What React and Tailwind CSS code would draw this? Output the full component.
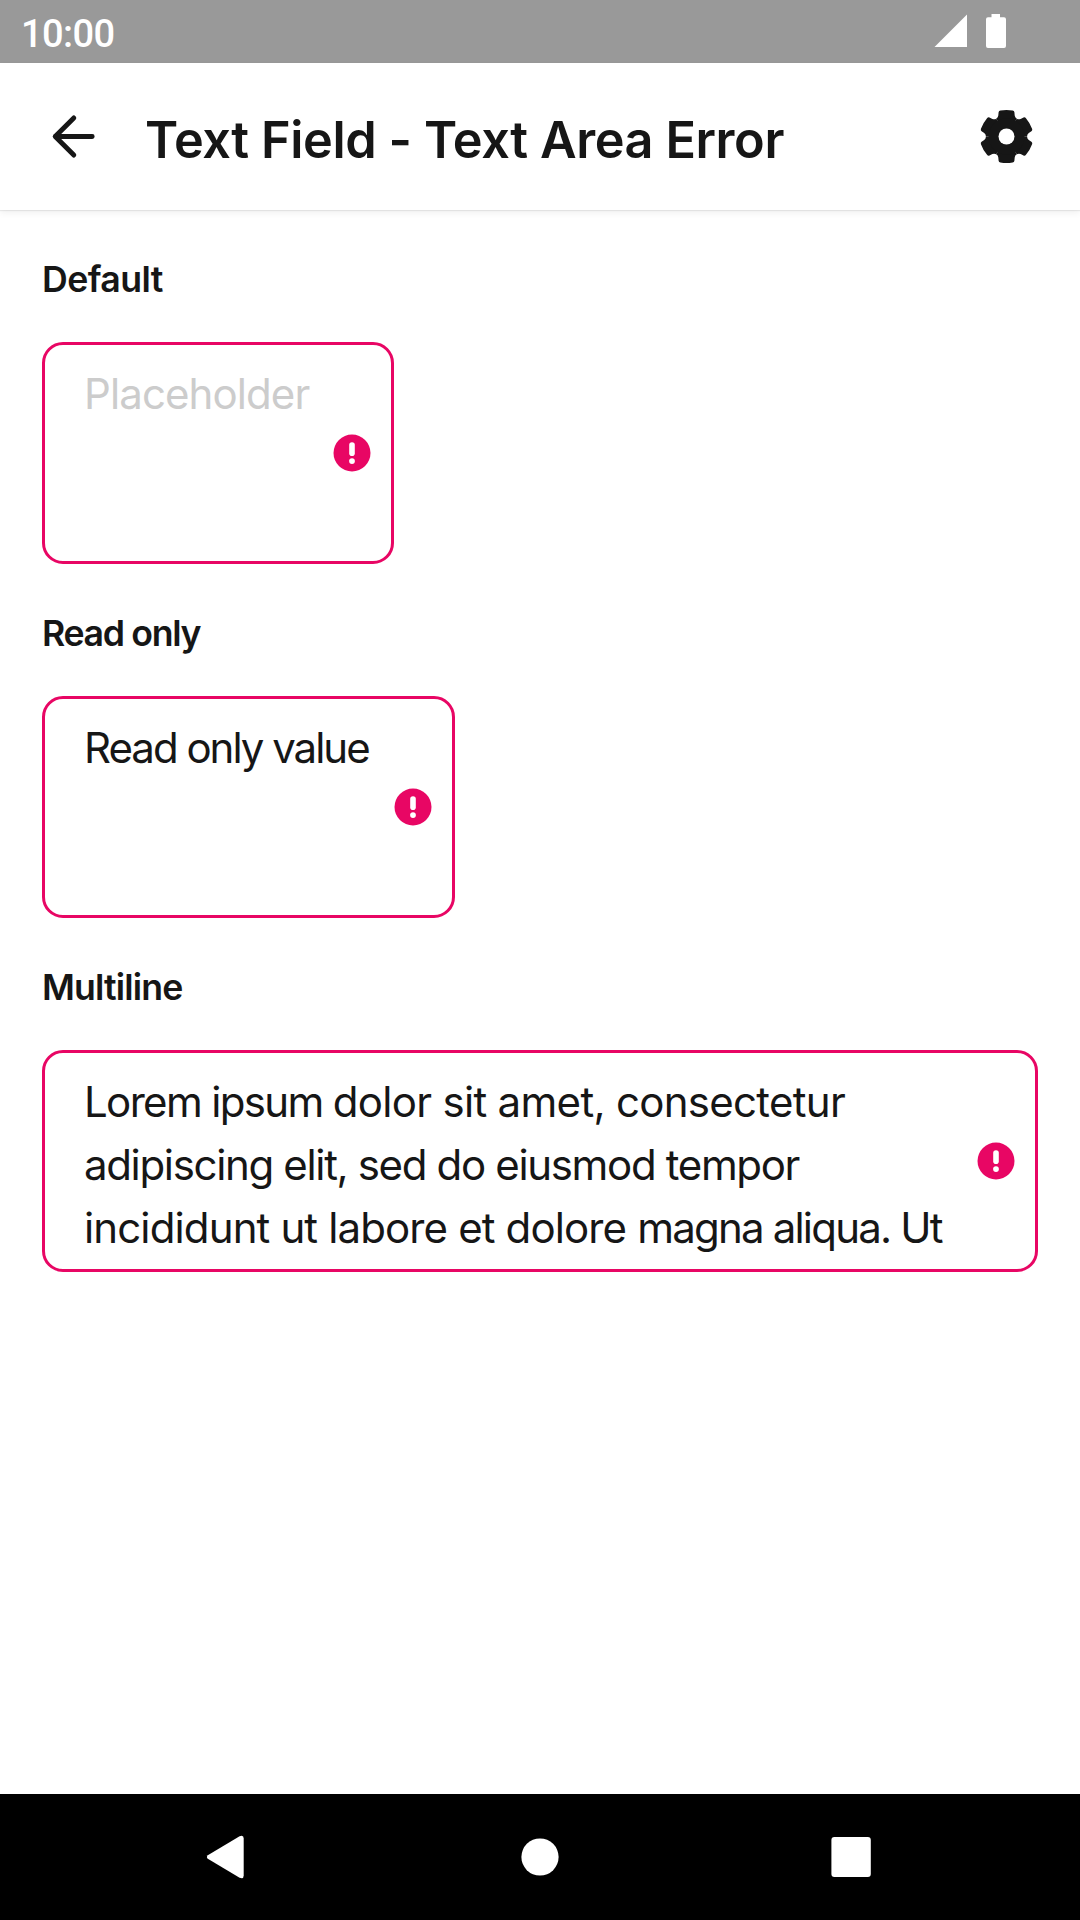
const ACCENT = "#E80664";

function SignalIcon() {
  return (
    <svg width="34" height="34" viewBox="0 0 34 34" fill="#fff">
      <path d="M0.5 33 L33 0.5 V33 Z" />
    </svg>
  );
}

function BatteryIcon() {
  return (
    <svg width="20" height="34" viewBox="0 0 20 34" fill="#fff">
      <path d="M5.5 0H14V3.3H18A2 2 0 0 1 20 5.3V32A2 2 0 0 1 18 34H2A2 2 0 0 1 0 32V5.3A2 2 0 0 1 2 3.3H5.5Z" />
    </svg>
  );
}

function BackIcon() {
  return (
    <svg width="63" height="63" viewBox="0 0 63 63" fill="none" stroke="#161616" strokeWidth="4.9" strokeLinecap="round" strokeLinejoin="round">
      <path d="M50.2 31.5H13.2M31.8 12.9L13.2 31.5L31.8 50.1" />
    </svg>
  );
}

const TEETH = [0, 60, 120, 180, 240, 300];

function GearIcon() {
  return (
    <svg width="63" height="63" viewBox="-31.5 -31.5 63 63" fill="#161616">
      {TEETH.map((angle) => (
        <path
          key={angle}
          transform={`rotate(${angle})`}
          d="M0 0L-10.3 -17.8Q-8.4 -18.9 -8.2 -21L-7.9 -24.2Q-7.7 -25.7 -6.1 -26Q0 -27.1 6.1 -26Q7.7 -25.7 7.9 -24.2L8.2 -21Q8.4 -18.9 10.3 -17.8Z"
        />
      ))}
      <circle r="18" />
      <circle r="8" fill="#fff" />
    </svg>
  );
}

function ErrorIcon() {
  return (
    <svg className="shrink-0" width="38" height="38" viewBox="-19 -19 38 38">
      <circle r="18.5" fill={ACCENT} />
      <rect x="-2.8" y="-10.7" width="5.6" height="13.8" rx="2.8" fill="#fff" />
      <circle cy="8.1" r="2.9" fill="#fff" />
    </svg>
  );
}

function Field({ label, labelClass, widthClass, children }) {
  return (
    <section className="mb-[42px]">
      <h2 className={`h-[54px] whitespace-nowrap text-[35.7px] leading-[55px] font-semibold ${labelClass}`}>{label}</h2>
      <div className={`mt-9 flex h-[222px] items-center justify-between overflow-hidden rounded-[21px] border-[3px] border-[#E80664] pr-5 pl-[39px] ${widthClass}`}>
        <div className="flex h-[199px] flex-col self-end text-[42px] leading-[63px] font-normal whitespace-nowrap">{children}</div>
        <ErrorIcon />
      </div>
    </section>
  );
}

export default function App() {
  return (
    <div className="flex h-[1920px] w-[1080px] flex-col overflow-hidden bg-white font-['Inter',sans-serif] text-[#161616]">
      <div className="flex h-[63px] shrink-0 items-center justify-between bg-[#999999] pr-[74px] pl-[21px]">
        <span className="mt-[4px] font-['Roboto',sans-serif] text-[38px] leading-none font-medium tracking-[-0.6px] text-white">10:00</span>
        <div className="mb-[1px] flex gap-[18px]">
          <SignalIcon />
          <BatteryIcon />
        </div>
      </div>

      <header className="flex h-[147px] shrink-0 items-center bg-white pr-[42px] pl-[42px] shadow-[0_1px_1px_rgba(0,0,0,0.07),0_3px_7px_rgba(0,0,0,0.06)]">
        <BackIcon />
        <h1 className="mt-[7px] ml-10 flex-1 text-[50.4px] leading-[60px] font-semibold tracking-[-0.4px] whitespace-nowrap">Text Field - Text Area Error</h1>
        <GearIcon />
      </header>

      <main className="flex-1 px-[42px] pt-[42px]">
        <Field label="Default" labelClass="tracking-[-0.6px]" widthClass="w-[352px]">
          <span className="tracking-[-0.9px] text-[#CCCCCC]">Placeholder</span>
        </Field>
        <Field label="Read only" labelClass="tracking-[-1.35px]" widthClass="w-[413px]">
          <span className="tracking-[-2px]">Read only value</span>
        </Field>
        <Field label="Multiline" labelClass="tracking-[-0.85px]" widthClass="w-[996px]">
          <p className="tracking-[-0.7px]">
            <span className="tracking-[-1.65px]">Lorem ipsum </span>dolor sit amet, consectetur
          </p>
          <p className="tracking-[-1.34px]">adipiscing elit, sed do eiusmod tempor</p>
          <p className="tracking-[-0.87px]">
            incididunt ut labore et dolore <span className="tracking-[-1.8px]">magna aliqua. Ut</span>
          </p>
        </Field>
      </main>

      <nav className="flex h-[126px] shrink-0 items-center justify-between bg-black pr-[209px] pl-[206px]">
        <svg width="38" height="44" viewBox="0 0 38 44" fill="#fff">
          <path d="M1.8 20.2L33.6 1.2Q37.7 -0.4 37.7 3.4V40.6Q37.7 44.4 33.6 42.8L1.8 23.8Q0 22 1.8 20.2Z" />
        </svg>
        <svg className="ml-[5px]" width="38" height="38" viewBox="0 0 38 38" fill="#fff">
          <circle cx="19" cy="19" r="18.6" />
        </svg>
        <svg width="40" height="40" viewBox="0 0 40 40" fill="#fff">
          <rect x="0.4" width="39.4" height="40" rx="3" />
        </svg>
      </nav>
    </div>
  );
}
